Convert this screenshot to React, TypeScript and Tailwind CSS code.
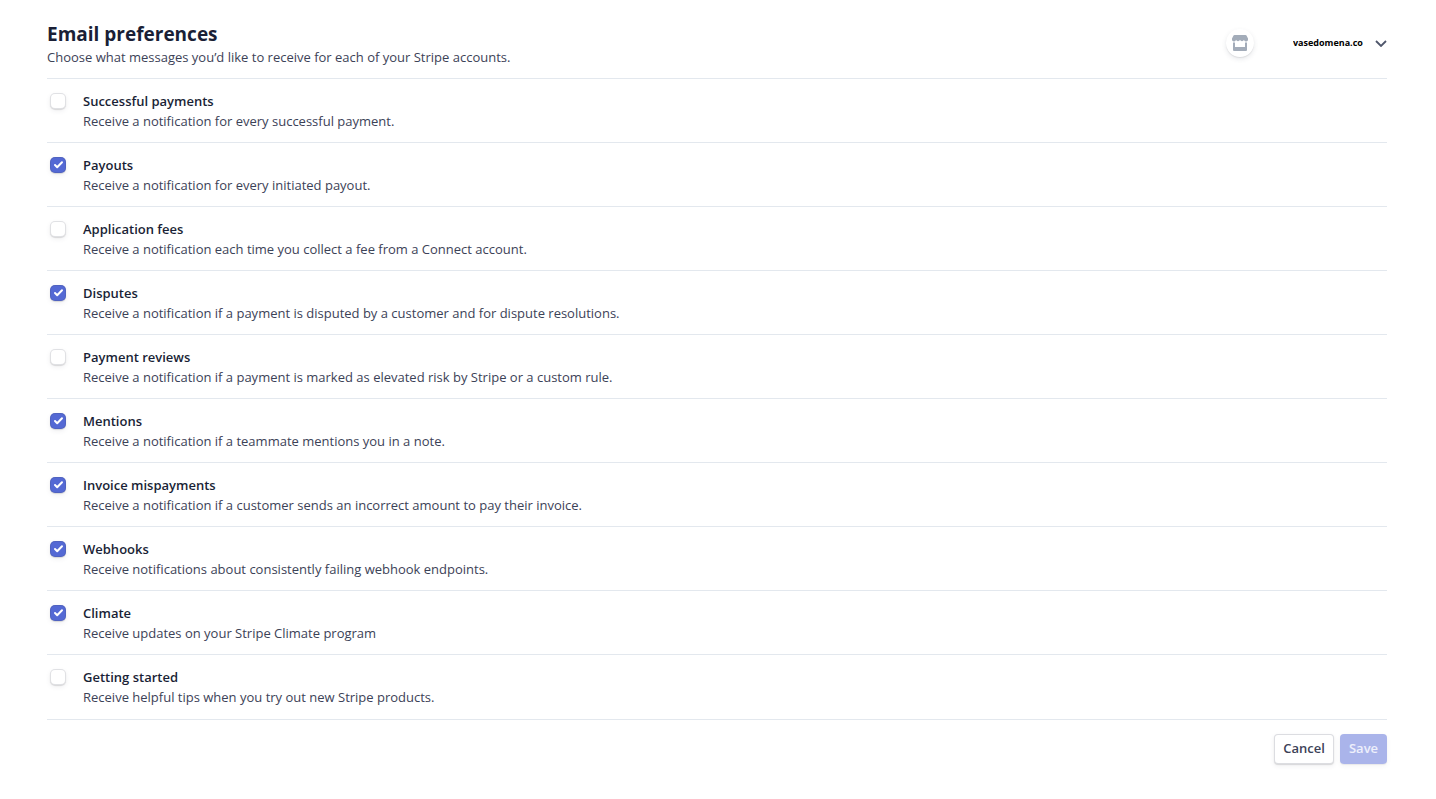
import React, { useState } from "react";

interface Preference {
  id: string;
  title: string;
  description: string;
  enabled: boolean;
}

const PREFERENCES: Preference[] = [
  {
    id: "successful-payments",
    title: "Successful payments",
    description: "Receive a notification for every successful payment.",
    enabled: false,
  },
  {
    id: "payouts",
    title: "Payouts",
    description: "Receive a notification for every initiated payout.",
    enabled: true,
  },
  {
    id: "application-fees",
    title: "Application fees",
    description:
      "Receive a notification each time you collect a fee from a Connect account.",
    enabled: false,
  },
  {
    id: "disputes",
    title: "Disputes",
    description:
      "Receive a notification if a payment is disputed by a customer and for dispute resolutions.",
    enabled: true,
  },
  {
    id: "payment-reviews",
    title: "Payment reviews",
    description:
      "Receive a notification if a payment is marked as elevated risk by Stripe or a custom rule.",
    enabled: false,
  },
  {
    id: "mentions",
    title: "Mentions",
    description: "Receive a notification if a teammate mentions you in a note.",
    enabled: true,
  },
  {
    id: "invoice-mispayments",
    title: "Invoice mispayments",
    description:
      "Receive a notification if a customer sends an incorrect amount to pay their invoice.",
    enabled: true,
  },
  {
    id: "webhooks",
    title: "Webhooks",
    description:
      "Receive notifications about consistently failing webhook endpoints.",
    enabled: true,
  },
  {
    id: "climate",
    title: "Climate",
    description: "Receive updates on your Stripe Climate program",
    enabled: true,
  },
  {
    id: "getting-started",
    title: "Getting started",
    description: "Receive helpful tips when you try out new Stripe products.",
    enabled: false,
  },
];

const StoreIcon: React.FC = () => (
  <svg viewBox="0 0 16 16" className="size-4" fill="#a3acb9" aria-hidden="true">
    <path d="M2.500 0h11c.4 0 .8.2 1 .6L16 3.500v.6a2 2 0 0 1-4 .6 2.100 2.100 0 0 1-4 0 2.100 2.100 0 0 1-4 0 2 2 0 0 1-4-.6v-.6L1.500.6c.2-.4.600-.6 1-.6z" />
    <path d="M1 7.500h2V12h10V7.500h2V15a1 1 0 0 1-1 1H2a1 1 0 0 1-1-1z" />
  </svg>
);

const AccountPicker: React.FC = () => (
  <div className="flex items-center gap-[39px]">
    <span className="flex size-7 items-center justify-center rounded-full bg-white shadow-[0_2px_5px_rgba(60,66,87,0.12),0_1px_1px_rgba(0,0,0,0.08)]">
      <StoreIcon />
    </span>
    <div className="grid items-center">
      <select
        aria-label="Account"
        className="col-start-1 row-start-1 appearance-none bg-transparent pr-6 text-[9px] leading-5 font-bold text-black"
      >
        <option>vasedomena.co</option>
      </select>
      <svg
        viewBox="0 0 12 8"
        className="pointer-events-none col-start-1 row-start-1 h-2 w-3 justify-self-end"
        fill="none"
        stroke="#4f566b"
        strokeWidth="1.8"
        aria-hidden="true"
      >
        <path d="M1 2l5 5 5-5" />
      </svg>
    </div>
  </div>
);

interface PreferenceRowProps {
  preference: Preference;
  onToggle: () => void;
}

const PreferenceRow: React.FC<PreferenceRowProps> = ({
  preference,
  onToggle,
}) => (
  <li className="flex gap-[17px] border-t border-[#e3e8ee] pt-3 pb-[11px] pl-[3px]">
    <span className="mt-0.5 grid size-4 shrink-0">
      <input
        type="checkbox"
        id={preference.id}
        checked={preference.enabled}
        onChange={onToggle}
        className="peer col-start-1 row-start-1 size-4 appearance-none rounded-[5px] bg-white shadow-[0_0_0_1px_rgba(60,66,87,0.16)_inset,0_1px_1px_rgba(0,0,0,0.12),0_2px_5px_rgba(60,66,87,0.08)] checked:bg-[#5469d4]"
      />
      <svg
        viewBox="0 0 16 16"
        className="pointer-events-none col-start-1 row-start-1 hidden size-4 peer-checked:block"
        fill="none"
        stroke="white"
        strokeWidth="2"
        strokeLinecap="round"
        strokeLinejoin="round"
        aria-hidden="true"
      >
        <path d="M5 8l2.200 2.200L12 5.200" />
      </svg>
    </span>
    <label htmlFor={preference.id} className="leading-5">
      <span className="block font-semibold text-[#1a1f36]">
        {preference.title}
      </span>
      <span className="block text-[#3c4257]">{preference.description}</span>
    </label>
  </li>
);

const App: React.FC = () => {
  const [preferences, setPreferences] = useState(PREFERENCES);

  const toggle = (id: string) =>
    setPreferences((current) =>
      current.map((item) =>
        item.id === id ? { ...item, enabled: !item.enabled } : item
      )
    );

  return (
    <main className="bg-white pt-5 pr-[49px] pb-8 pl-[47px] font-['Open_Sans',sans-serif] text-[13px]">
      <header className="flex items-start justify-between pb-3">
        <div>
          <h1 className="text-[19px] leading-7 font-bold text-[#1a1f36]">
            Email preferences
          </h1>
          <p className="leading-[18px] text-[#3c4257]">
            Choose what messages you’d like to receive for each of your Stripe
            accounts.
          </p>
        </div>
        <div className="pt-[9px]">
          <AccountPicker />
        </div>
      </header>

      <ul>
        {preferences.map((preference) => (
          <PreferenceRow
            key={preference.id}
            preference={preference}
            onToggle={() => toggle(preference.id)}
          />
        ))}
      </ul>

      <footer className="mt-px flex justify-end gap-1.5 border-t border-[#e3e8ee] pt-[14px]">
        <button
          type="button"
          className="h-[30px] w-[60px] rounded bg-white font-semibold text-[#3c4257] shadow-[0_0_0_1px_rgba(60,66,87,0.18)_inset,0_1px_1px_rgba(0,0,0,0.12),0_2px_5px_rgba(60,66,87,0.08)]"
        >
          Cancel
        </button>
        <button
          type="button"
          className="h-[30px] w-[47px] rounded bg-[#aab4ea] font-semibold text-white/80 shadow-[0_1px_1px_rgba(0,0,0,0.06),0_2px_5px_rgba(60,66,87,0.06)]"
        >
          Save
        </button>
      </footer>
    </main>
  );
};

export default App;
